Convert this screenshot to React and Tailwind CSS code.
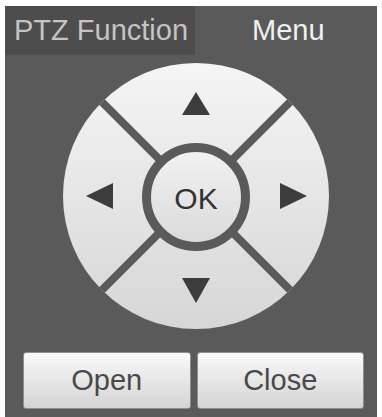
import React from 'react';

const DPad = () => (
  <svg width="266" height="266" viewBox="0 0 266 266">
    <defs>
      <linearGradient id="padFill" x1="0" y1="0" x2="0" y2="1">
        <stop offset="0" stopColor="#f5f5f5" />
        <stop offset="1" stopColor="#d6d6d6" />
      </linearGradient>
      <linearGradient id="okFill" x1="0" y1="0" x2="0" y2="1">
        <stop offset="0" stopColor="#f2f2f2" />
        <stop offset="1" stopColor="#dadada" />
      </linearGradient>
    </defs>
    <circle cx="133" cy="133" r="133" fill="url(#padFill)" />
    {/* dividers */}
    <line x1="39" y1="39" x2="227" y2="227" stroke="#5a5a5a" strokeWidth="8" />
    <line x1="227" y1="39" x2="39" y2="227" stroke="#5a5a5a" strokeWidth="8" />
    {/* OK button */}
    <circle cx="133" cy="134" r="49.5" fill="url(#okFill)" stroke="#5a5a5a" strokeWidth="9" />
    <text
      x="133"
      y="135"
      textAnchor="middle"
      dominantBaseline="central"
      fontFamily="'Liberation Sans', Arial, sans-serif"
      fontSize="30"
      fill="#333333"
    >
      OK
    </text>
    {/* arrows */}
    <polygon points="119,52 147,52 133,29" fill="#3c3c3c" />
    <polygon points="119,215 147,215 133,240" fill="#3c3c3c" />
    <polygon points="50,120 50,146 23,133" fill="#3c3c3c" />
    <polygon points="217,120 217,146 244,133" fill="#3c3c3c" />
  </svg>
);

const PanelButton = ({ label }) => (
  <button
    type="button"
    className="flex-1 h-[57px] rounded-[3px] border border-[#8e8e8e] bg-gradient-to-b from-[#fafafa] to-[#d4d4d4] text-[29px] text-[#4a4a4a] leading-none"
  >
    {label}
  </button>
);

export default function App() {
  return (
    <div className="w-[382px] h-[417px] bg-white pt-[6px] px-[5px] overflow-hidden font-['Liberation_Sans',Arial,sans-serif]">
      <div className="h-[420px] bg-[#5a5a5a] flex flex-col">
        {/* Header */}
        <div className="flex h-[49px] items-center">
          <div className="w-[190px] h-full bg-[#4d4d4d] flex items-center pl-[9px] text-[29px] text-[#c4c4c4] leading-none">
            PTZ Function
          </div>
          <div className="ml-[57px] text-[29px] text-[#f0f0f0] leading-none">Menu</div>
        </div>

        {/* Direction pad */}
        <div className="mt-[8px] ml-[58px]">
          <DPad />
        </div>

        {/* Buttons */}
        <div className="flex gap-[6px] mt-[23px] ml-[18px] mr-[13px]">
          <PanelButton label="Open" />
          <PanelButton label="Close" />
        </div>
      </div>
    </div>
  );
}
